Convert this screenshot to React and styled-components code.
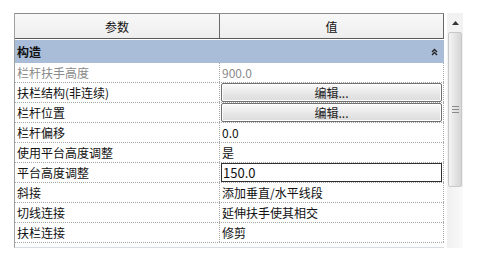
import React from "react";
import styled, { createGlobalStyle } from "styled-components";

const GlobalStyle = createGlobalStyle`
  body {
    margin: 0;
    background: #fff;
    font-family: "Noto Sans CJK SC", "Liberation Sans", sans-serif;
  }
`;

const rows = [
  { name: "栏杆扶手高度", value: "900.0", disabled: true },
  { name: "扶栏结构(非连续)", value: "编辑...", kind: "button" },
  { name: "栏杆位置", value: "编辑...", kind: "button" },
  { name: "栏杆偏移", value: "0.0" },
  { name: "使用平台高度调整", value: "是" },
  { name: "平台高度调整", value: "150.0", kind: "input" },
  { name: "斜接", value: "添加垂直/水平线段" },
  { name: "切线连接", value: "延伸扶手使其相交" },
  { name: "扶栏连接", value: "修剪" },
];

const Page = styled.div`
  width: 485px;
  height: 261px;
  padding: 13px 0 0 14px;
  box-sizing: border-box;
  display: flex;
  gap: 3px;
`;

const Grid = styled.div`
  width: 430px;
  height: 235px;
  display: flex;
  flex-direction: column;
  border-left: 1px solid #a0a0a0;
  border-bottom: 1px solid #d8dde4;
  box-sizing: border-box;
`;

const Header = styled.div`
  display: grid;
  grid-template-columns: 205px 1fr;
  height: 26px;
  background: linear-gradient(#f8f8f8, #eeeeee);
  border-top: 1px solid #8c8c8c;
  border-right: 1px solid #6a6a6a;
  border-bottom: 1px solid #5a5a5a;
  box-sizing: border-box;
`;

const HeadCell = styled.div`
  display: flex;
  align-items: center;
  justify-content: center;
  font-size: 12px;
  color: #111;
  border-right: ${(p) => (p.last ? "none" : "1px solid #6a6a6a")};
`;

const Group = styled.div`
  height: 23px;
  margin-top: 1px;
  background: #a9bdd9;
  display: flex;
  align-items: center;
  justify-content: space-between;
  padding: 0 6px 0 2px;
  font-size: 12px;
  font-weight: bold;
  color: #111;
`;

const Row = styled.div`
  display: grid;
  grid-template-columns: 205px 1fr;
  height: 20px;
  border-bottom: 1px dotted #a8a8a8;
  box-sizing: border-box;
  font-size: 12px;
  color: ${(p) => (p.disabled ? "#8a8a8a" : "#111")};
`;

const NameCell = styled.div`
  display: flex;
  align-items: center;
  padding-left: 2px;
  border-right: 1px dotted #a8a8a8;
  white-space: nowrap;
`;

const ValueCell = styled.div`
  display: flex;
  align-items: center;
  padding: 0 1px;
  border-right: 1px dotted #a8a8a8;
  white-space: nowrap;
`;

const PlainValue = styled.span`
  padding-left: 1px;
`;

const EditButton = styled.div`
  flex: 1;
  height: 17px;
  display: flex;
  align-items: center;
  justify-content: center;
  border: 1px solid #707070;
  border-radius: 2px;
  background: linear-gradient(#fafafa, #e6e6e6 60%, #dcdcdc);
  box-shadow: inset 0 0 0 1px #fff;
  font-size: 12px;
  color: #222;
`;

const ValueInput = styled.div`
  flex: 1;
  height: 19px;
  display: flex;
  align-items: center;
  padding-left: 1px;
  border: 1px solid #303030;
  box-sizing: border-box;
  font-size: 13px;
  color: #111;
  background: #fff;
`;

const Scrollbar = styled.div`
  width: 16px;
  height: 235px;
  display: flex;
  flex-direction: column;
  background: #f2f2f2;
`;

const ArrowButton = styled.div`
  height: 19px;
  display: flex;
  align-items: center;
  justify-content: center;
`;

const Thumb = styled.div`
  height: 153px;
  margin: 0 1px;
  border: 1px solid #c8c8c8;
  border-radius: 2px;
  background: linear-gradient(90deg, #f4f4f4, #e4e4e4 50%, #d6d6d6);
  display: flex;
  align-items: center;
  justify-content: center;
`;

const Grip = styled.div`
  width: 7px;
  display: flex;
  flex-direction: column;
  gap: 2px;
  & span {
    height: 1px;
    background: #8a8a8a;
  }
`;

const Track = styled.div`
  flex: 1;
  background: linear-gradient(90deg, #f0f0f0, #fafafa);
`;

export default function App() {
  return (
    <>
      <GlobalStyle />
      <Page>
        <Grid>
          <Header>
            <HeadCell>参数</HeadCell>
            <HeadCell last>值</HeadCell>
          </Header>
          <Group>
            <span>构造</span>
            <svg width="7" height="8" viewBox="0 0 7 8">
              <path d="M1 4 L3.5 1.5 L6 4 M1 7 L3.5 4.5 L6 7" fill="none" stroke="#222" strokeWidth="1.3" />
            </svg>
          </Group>
          {rows.map((r) => (
            <Row key={r.name} disabled={r.disabled}>
              <NameCell>{r.name}</NameCell>
              <ValueCell>
                {r.kind === "button" ? (
                  <EditButton>{r.value}</EditButton>
                ) : r.kind === "input" ? (
                  <ValueInput>{r.value}</ValueInput>
                ) : (
                  <PlainValue>{r.value}</PlainValue>
                )}
              </ValueCell>
            </Row>
          ))}
        </Grid>
        <Scrollbar>
          <ArrowButton>
            <svg width="7" height="4" viewBox="0 0 7 4">
              <path d="M0 4 L3.5 0 L7 4 Z" fill="#333" />
            </svg>
          </ArrowButton>
          <Thumb>
            <Grip>
              <span />
              <span />
              <span />
            </Grip>
          </Thumb>
          <Track />
        </Scrollbar>
      </Page>
    </>
  );
}
